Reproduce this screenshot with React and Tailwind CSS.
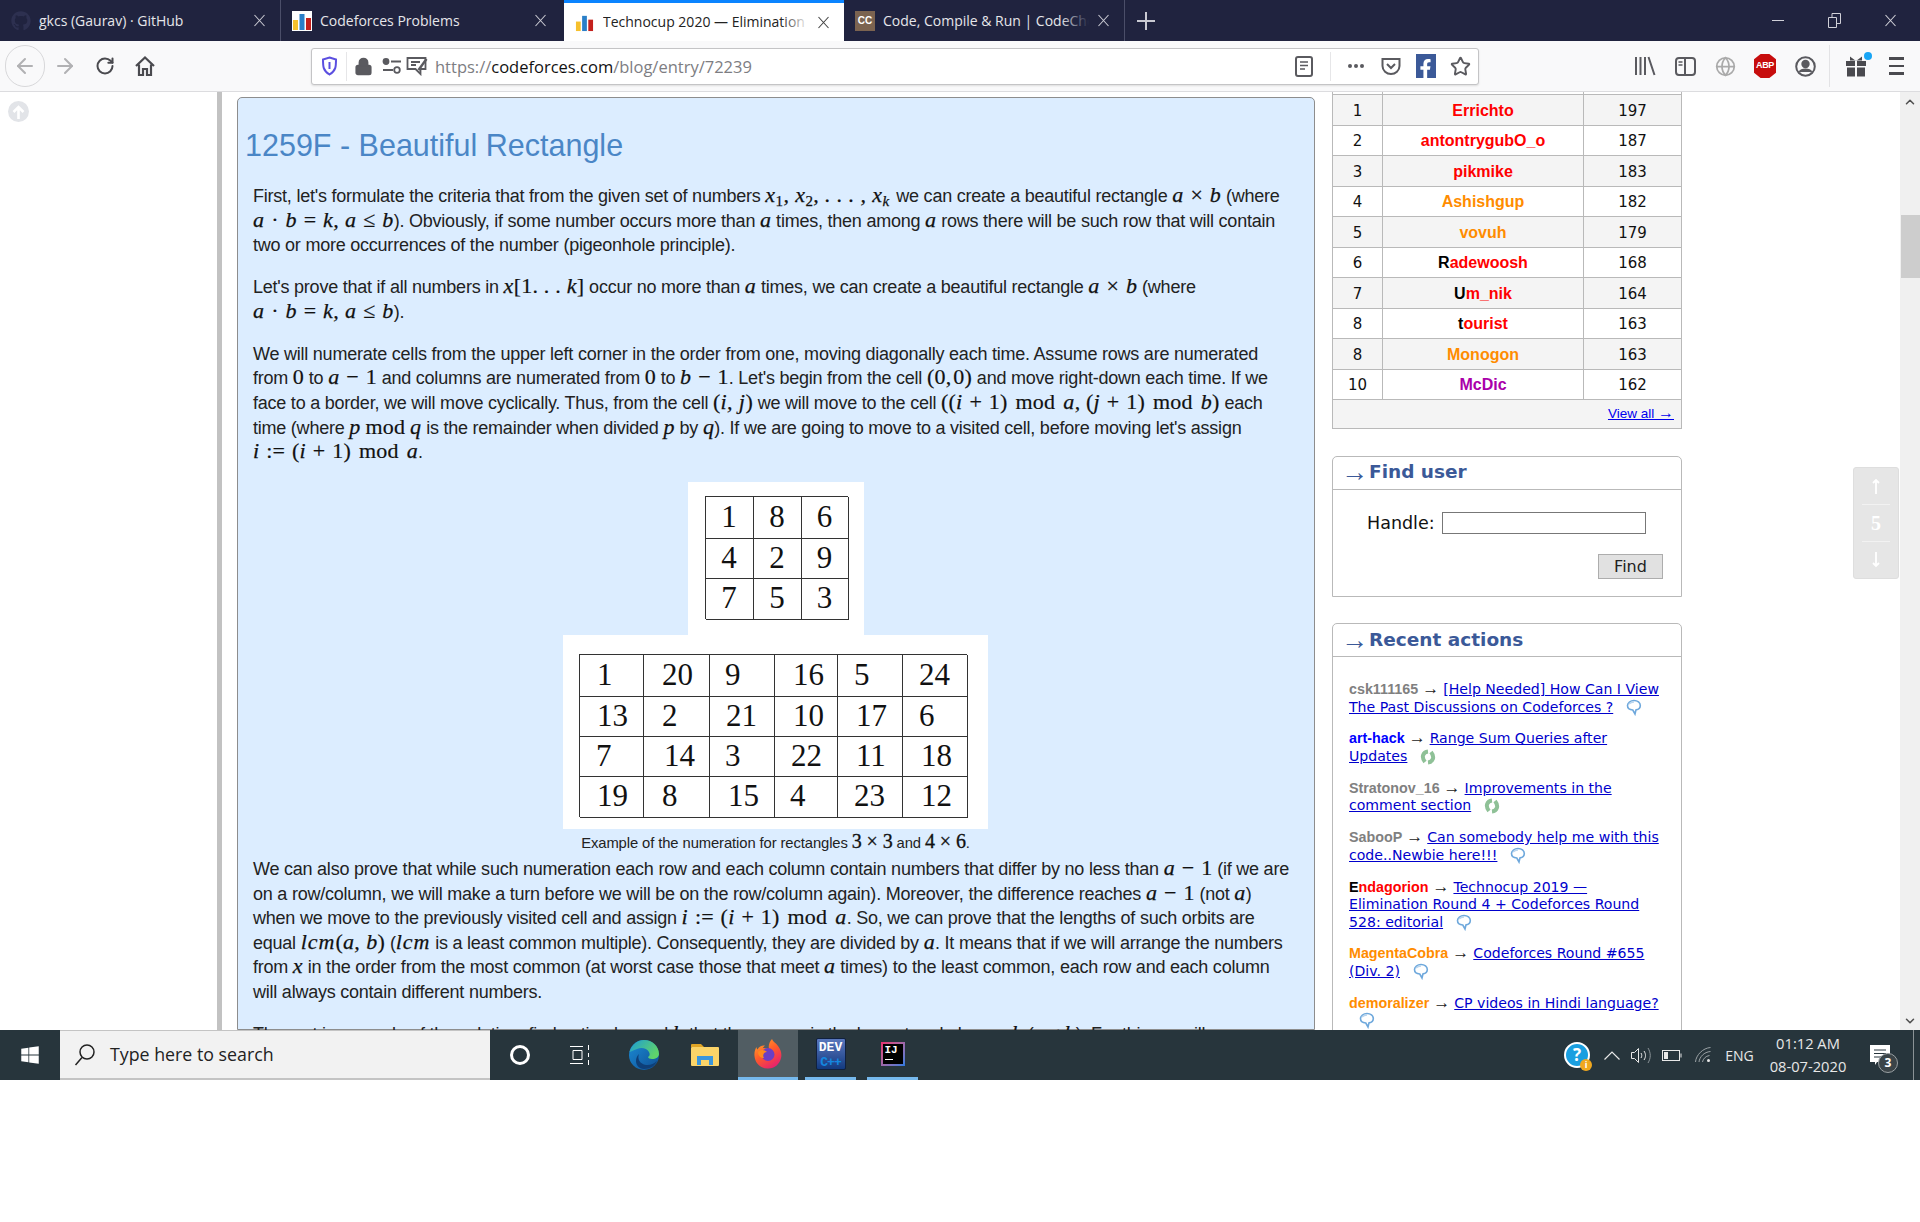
import React from "react";
import { ArrowLeft, ArrowRight, RotateCw, Lock, Star, ChevronUp, ChevronDown, Globe } from "lucide-react";
import { FaGithub, FaFacebookF, FaWindows } from "react-icons/fa";

const M = ({ children }) => <span className="font-['Liberation_Serif'] italic text-[22px] leading-none tracking-[0.4px] text-[#111] [-webkit-text-stroke:0.25px_#111]">{children}</span>;
const U = ({ children }) => <span className="font-['Liberation_Serif'] text-[22px] leading-none tracking-[0.2px] text-[#111] [-webkit-text-stroke:0.2px_#111]">{children}</span>;
const Op = ({ children }) => <span className="mx-[2px]"><U>{children}</U></span>;
const Mod = () => <span className="mx-[8px]"><U>mod</U></span>;
const Lcm = () => <span className="font-['Liberation_Serif'] italic text-[22px] leading-none tracking-[1px] text-[#111] [-webkit-text-stroke:0.25px_#111]">lcm</span>;
const C = ({ children }) => <span className="font-['Liberation_Serif'] text-[20px] leading-none text-[#111] [-webkit-text-stroke:0.3px_#111]">{children}</span>;
const L = ({ children }) => <div className="h-[24.6px] leading-[24.6px] whitespace-nowrap">{children}</div>;

const CfIcon = ({ size = 20 }) => (
  <svg width={size} height={size} viewBox="0 0 20 20">
    <rect x="1" y="9" width="5" height="10" fill="#f6c02c" />
    <rect x="7.5" y="3" width="5" height="16" fill="#2a7fc8" />
    <rect x="14" y="7" width="5" height="12" fill="#c4201c" />
  </svg>
);
const TabX = ({ c }) => (
  <svg width="13" height="13" viewBox="0 0 13 13" stroke={c} strokeWidth="1.1" className="shrink-0">
    <path d="M1.5 1L11.5 12M11.5 1L1.5 12" />
  </svg>
);

const Tab = ({ icon, label, active, last, wide }) => (
  <div className={active
    ? "relative w-[280px] h-[41px] shrink-0 flex items-center bg-white border-t-[3px] border-[#0a84ff] text-[#222]"
    : wide
      ? "relative w-[283px] h-[41px] shrink-0 flex items-center text-[#e6e6ea]"
      : "relative w-[281px] h-[41px] shrink-0 flex items-center border-r border-[#4b4e69] text-[#e6e6ea]"}>
    <span className="w-[39px] pl-[11px] shrink-0 flex items-center">{icon}</span>
    <span className="relative w-[206px] overflow-hidden whitespace-nowrap font-['Open_Sans'] text-[14px] leading-[20px]">
      {label}
      {active && <span className="absolute right-0 top-0 h-full w-[28px] bg-linear-to-r from-transparent to-white" />}
      {last && <span className="absolute right-0 top-0 h-full w-[28px] bg-linear-to-r from-transparent to-[#20233f]" />}
    </span>
    <span className="w-[8px] shrink-0" />
    <TabX c={active ? "#444" : "#c9c9d2"} />
  </div>
);

const TB = ({ children }) => <div className="w-[40px] h-[42px] flex items-center justify-center shrink-0">{children}</div>;

const board = [
  ["1", "Errichto", "197", "r"], ["2", "antontrygubO_o", "187", "r"], ["3", "pikmike", "183", "r"],
  ["4", "Ashishgup", "182", "o"], ["5", "vovuh", "179", "o"], ["6", "Radewoosh", "168", "l"],
  ["7", "Um_nik", "164", "l"], ["8", "tourist", "163", "l"], ["8", "Monogon", "163", "o"], ["10", "McDic", "162", "m"],
];
const Name = ({ n, k }) => {
  if (k === "l") return <><span className="text-black">{n[0]}</span><span className="text-[#ff0000]">{n.slice(1)}</span></>;
  return <span className={k === "r" ? "text-[#ff0000]" : k === "o" ? "text-[#ff8c00]" : "text-[#aa00aa]"}>{n}</span>;
};

const Bubble = () => (
  <svg width="16" height="17" viewBox="0 0 16 17" fill="none" stroke="#6ea8dc" strokeWidth="1.6" className="absolute left-0 top-[-13px]">
    <path d="M8 1.500c3.600 0 6.300 2.300 6.300 5s-2 4-4.300 4.400L9 15l-2.200-4C3.600 10.800 1.500 9 1.500 6.500S4.400 1.500 8 1.500z" />
    <path d="M3 5c1.500-1.500 3-2 5-2" stroke="#b9d5ee" />
  </svg>
);
const Swirl = () => (
  <svg width="16" height="16" viewBox="0 0 16 16" fill="none" stroke="#8fc197" strokeWidth="4" className="absolute left-0 top-[-12px]">
    <path d="M8 2.500C3 3 1 8 5 13" />
    <path d="M8 13.500C13 13 15 8 11 3" />
  </svg>
);
const Arrow = () => <span className="font-['Liberation_Serif'] text-[#222] text-[17px] leading-none mx-[4px]">→</span>;
const Act = ({ h, lines, icon, tight }) => (
  <div className="mb-[13.4px] leading-[17.5px] whitespace-nowrap font-['DejaVu_Sans'] text-[14.1px]">
    {h}
    <Arrow />
    {lines.map((t, i) => (
      <React.Fragment key={i}>
        {i > 0 && <br />}
        <a className="text-[#0000cc] underline">{t}</a>
      </React.Fragment>
    ))}
    <span className={tight ? "relative inline-block w-[16px] h-0 ml-[10px]" : "relative inline-block w-[16px] h-0 ml-[13px]"}>{icon === "s" ? <Swirl /> : <Bubble />}</span>
  </div>
);
const H = ({ c, children }) => <b className={"font-['Liberation_Sans'] text-[14.3px] " + c}>{children}</b>;

const t2 = [
  [["1", "pl-[17px]"], ["20", "pl-[18px]"], ["9", "pl-[15px]"], ["16", "pl-[18px]"], ["5", "pl-[16px]"], ["24", "pl-[16px]"]],
  [["13", "pl-[17px]"], ["2", "pl-[18px]"], ["21", "pl-[16px]"], ["10", "pl-[18px]"], ["17", "pl-[18px]"], ["6", "pl-[16px]"]],
  [["7", "pl-[16px]"], ["14", "pl-[20px]"], ["3", "pl-[15px]"], ["22", "pl-[16px]"], ["11", "pl-[18px]"], ["18", "pl-[18px]"]],
  [["19", "pl-[17px]"], ["8", "pl-[18px]"], ["15", "pl-[18px]"], ["4", "pl-[15px]"], ["23", "pl-[16px]"], ["12", "pl-[18px]"]],
];

const Firefox = () => (
  <svg width="30" height="30" viewBox="0 0 30 30">
    <defs>
      <linearGradient id="ff1" x1="0" y1="0" x2="0.6" y2="1"><stop offset="0" stopColor="#ffb02a" /><stop offset="0.55" stopColor="#ff5a2a" /><stop offset="1" stopColor="#e8246b" /></linearGradient>
    </defs>
    <path d="M19 0c1 3 4 4 6 7 3 4 4 8 3 12-1 6-7 11-13.500 10.500C7 29 2 24 1.500 17 1 13 2.500 9.500 3.500 8c0 1 .5 2 1 2.500C6 7.500 9 6 12 6.500c-1 1-2 2-2 2.500 3 0 6 1 6 1-1-4 1-8 3-10z" fill="url(#ff1)" />
    <circle cx="15" cy="15.500" r="6.500" fill="#6b3fc4" />
    <path d="M5 13c3-3 7-2 9 0-3 0-5 3-3 6-3 0-6-2-6-6z" fill="#ff8a1e" />
  </svg>
);
const Edge = () => (
  <svg width="32" height="32" viewBox="0 0 32 32">
    <defs>
      <linearGradient id="ed1" x1="0" y1="0" x2="1" y2="0.5"><stop offset="0" stopColor="#1a9ad8" /><stop offset="1" stopColor="#5fd36b" /></linearGradient>
      <linearGradient id="ed2" x1="0" y1="0" x2="1" y2="1"><stop offset="0" stopColor="#1b8cd6" /><stop offset="1" stopColor="#0f4f94" /></linearGradient>
    </defs>
    <circle cx="16" cy="16" r="15" fill="url(#ed2)" />
    <path d="M1.500 13C4 5 10 1 16 1c8 0 15 6 15 14 0 3-3 5-7 5-2 0-4-1-4-2 2-1 2-3 1-5-2-4-8-5-12-3-4 1.500-6 3-8.500 3z" fill="url(#ed1)" />
    <path d="M11 15c-2 5 1 10 7 11 4 .5 8-1 11-4-2 5-7 8-13 8-5 0-8-4-8-8 0-3 1-5 3-7z" fill="#0e3f78" />
  </svg>
);
const HArrow = () => <span className="font-['Liberation_Serif'] font-normal text-[27px] leading-none mr-[1px]">→</span>;

export default function App() {
  return (
    <div className="w-[1920px] h-[1222px] flex flex-col overflow-hidden bg-white font-['Liberation_Sans',sans-serif]">
      {/* tab strip */}
      <div className="h-[41px] shrink-0 flex items-stretch bg-[#20233f]">
        <Tab icon={<FaGithub size={20} color="#2d3050" />} label="gkcs (Gaurav) · GitHub" />
        <Tab wide icon={<span className="bg-white w-[20px] h-[20px] flex"><CfIcon /></span>} label="Codeforces Problems" />
        <Tab active icon={<CfIcon size={19} />} label="Technocup 2020 — Elimination Round 3" />
        <Tab last icon={<span className="w-[20px] h-[20px] bg-[#7b6350] flex items-center justify-center text-white text-[10px] font-bold font-['Liberation_Sans']">CC</span>} label="Code, Compile & Run | CodeChef" />
        <div className="ml-[11px] w-[20px] flex items-center justify-center">
          <svg width="18" height="18" viewBox="0 0 18 18" stroke="#c9c9d2" strokeWidth="2"><path d="M9 0v18M0 9h18" /></svg>
        </div>
        <div className="ml-auto flex items-center text-[#d0d0d8]">
          <div className="w-[56px] flex justify-center"><svg width="12" height="2" viewBox="0 0 12 2" fill="#d0d0d8"><rect width="12" height="1" /></svg></div>
          <div className="w-[56px] flex justify-center">
            <svg width="13" height="15" viewBox="0 0 13 15" fill="none" stroke="#d0d0d8"><path d="M.5 4.500h8v10h-8zM4 4V.5h8.500v10H9" /></svg>
          </div>
          <div className="w-[58px] flex justify-center pr-[2px]"><TabX c="#d0d0d8" /></div>
        </div>
      </div>

      {/* toolbar */}
      <div className="h-[51px] shrink-0 flex items-center bg-[#f9f9fa] border-b border-[#dcdcdf] pl-[5px]">
        <div className="w-[40px] h-[42px] rounded-full border border-[#d8d8da] flex items-center justify-center shrink-0"><ArrowLeft size={24} color="#b1b1b3" strokeWidth={2} /></div>
        <TB><ArrowRight size={24} color="#b1b1b3" strokeWidth={2} /></TB>
        <TB><RotateCw size={20} color="#4a4a4f" strokeWidth={2.4} /></TB>
        <TB>
          <svg width="22" height="22" viewBox="0 0 22 22" fill="none" stroke="#4a4a4f" strokeWidth="2.200"><path d="M2 11l9-8.500L20 11M5 9.500V20h4v-6h4v6h4V9.500" /></svg>
        </TB>
        <div className="ml-[146px] w-[1168px] h-[37px] shrink-0 rounded-[3px] bg-white border border-[#c4c4c6] shadow-[0_1px_2px_#ddd] flex items-center">
          <div className="w-[34px] flex justify-center">
            <svg width="17" height="20" viewBox="0 0 17 20" fill="none" stroke="#5b4fe0" strokeWidth="2"><path d="M8.500 1.500l6.500 2c0 7 0 11-6.500 15C2 14.500 2 10.500 2 3.500z" /><path d="M8.500 6v7" strokeWidth="2" /></svg>
          </div>
          <div className="w-px h-[29px] bg-[#e6e6e8]" />
          <div className="w-[33px] flex justify-center"><Lock size={19} color="#5a5a5f" fill="#5a5a5f" strokeWidth={2.4} /></div>
          <div className="w-[24px] flex justify-center">
            <svg width="20" height="18" viewBox="0 0 20 18" fill="none" stroke="#5a5a5f" strokeWidth="1.800"><circle cx="4" cy="4.500" r="2.500" fill="#5a5a5f" /><path d="M9 4.500h10M1 13h10" /><circle cx="15" cy="13" r="2.800" /></svg>
          </div>
          <div className="w-[26px] flex justify-center">
            <svg width="22" height="20" viewBox="0 0 22 20" fill="none" stroke="#5a5a5f" strokeWidth="1.800"><path d="M1.500 2h18v11h-5v5l-5-5h-8z" /><path d="M5 6h9M5 9h5" /><path d="M20.500 3l-8 11" strokeWidth="2.400" /></svg>
          </div>
          <div className="ml-[5px] pt-[3px] font-['Open_Sans'] text-[16.5px] text-[#7d7d82] whitespace-nowrap">https://<span className="text-[#111]">codeforces.com</span>/blog/entry/72239</div>
          <div className="ml-auto flex items-center">
            <div className="w-[36px] ml-[1px] flex justify-center">
              <svg width="18" height="21" viewBox="0 0 18 21" fill="none" stroke="#5a5a5f" strokeWidth="2"><rect x="1" y="1" width="16" height="19" rx="2" /><path d="M5 6h8M5 9.500h8M5 13h5" strokeWidth="1.500" /></svg>
            </div>
            <div className="w-px h-[29px] bg-[#e6e6e8] mx-[8px]" />
            <div className="w-[34px] flex justify-center gap-[2px]"><span className="w-[4px] h-[4px] rounded-full bg-[#5a5a5f]" /><span className="w-[4px] h-[4px] rounded-full bg-[#5a5a5f]" /><span className="w-[4px] h-[4px] rounded-full bg-[#5a5a5f]" /></div>
            <div className="w-[35px] flex justify-center">
              <svg width="20" height="19" viewBox="0 0 20 19" fill="none" stroke="#5a5a5f" strokeWidth="2"><path d="M1.500 2h17v7c0 4.500-4 8-8.500 8s-8.500-3.500-8.500-8z" /><path d="M6 7l4 4 4-4" /></svg>
            </div>
            <div className="w-[35px] flex justify-center"><span className="w-[20px] h-[24px] bg-[#3b5998] flex items-end justify-center"><FaFacebookF size={19} color="#fff" /></span></div>
            <div className="w-[35px] flex justify-center"><Star size={21} color="#5a5a5f" strokeWidth={2.2} /></div>
          </div>
        </div>
        <div className="ml-[146px] flex items-center shrink-0">
          <TB>
            <svg width="22" height="20" viewBox="0 0 22 20" stroke="#5a5a5f" strokeWidth="2" fill="none"><path d="M2 1v18M6.500 1v18M11 1v18M14.500 1l6 18" /></svg>
          </TB>
          <TB>
            <svg width="21" height="19" viewBox="0 0 21 19" fill="none" stroke="#5a5a5f" strokeWidth="2"><rect x="1" y="1" width="19" height="17" rx="3" /><path d="M10 1v17" /><path d="M3.500 5h4M3.500 8h4" strokeWidth="1.300" /></svg>
          </TB>
          <TB><Globe size={21} color="#aaaaaa" strokeWidth={2} /></TB>
          <TB>
            <span className="w-[22px] h-[24px] bg-[#c70d0d] [clip-path:polygon(30%_0,70%_0,100%_22%,100%_78%,70%_100%,30%_100%,0_78%,0_22%)] flex items-center justify-center text-white text-[9px] font-bold tracking-[-0.3px]">ABP</span>
          </TB>
          <TB>
            <svg width="21" height="21" viewBox="0 0 21 21" fill="none" stroke="#5a5a5f" strokeWidth="2"><circle cx="10.500" cy="10.500" r="9.300" /><circle cx="10.500" cy="8" r="3.200" fill="#5a5a5f" /><path d="M4.500 16c2-3.500 10-3.500 12 0" fill="#5a5a5f" /></svg>
          </TB>
          <div className="w-px h-[42px] bg-[#e3e3e5] ml-[4px] mr-[6px]" />
          <TB>
            <span className="relative">
              <svg width="22" height="22" viewBox="0 0 22 22" fill="#4a4a4f"><rect x="1" y="6" width="9" height="5" /><rect x="12" y="6" width="9" height="5" /><rect x="2" y="12.500" width="8" height="9" /><rect x="12" y="12.500" width="8" height="9" /><path d="M5 1.500l6 4.500 6-4.500v4H5z" /></svg>
              <span className="absolute -top-[3px] -right-[5px] w-[8px] h-[8px] rounded-full bg-[#18a5f5]" />
            </span>
          </TB>
          <TB><span className="flex flex-col gap-[5px]"><span className="block w-[15px] h-[2.500px] bg-[#4a4a4f]" /><span className="block w-[15px] h-[2.500px] bg-[#4a4a4f]" /><span className="block w-[15px] h-[2.500px] bg-[#4a4a4f]" /></span></TB>
        </div>
      </div>

      {/* page */}
      <div className="relative h-[938px] shrink-0 flex overflow-hidden bg-white">
        <div className="w-[217px] shrink-0 pl-[8px] pt-[9px]">
          <div className="w-[21px] h-[21px] rounded-full bg-[#e2e4e8] flex items-center justify-center">
            <svg width="13" height="14" viewBox="0 0 13 14" fill="none" stroke="#fff" strokeWidth="2.600"><path d="M6.500 14V2M1.500 7l5-5 5 5" /></svg>
          </div>
        </div>
        <div className="w-[5px] shrink-0 bg-[#c2c2c2]" />

        {/* blog card */}
        <div className="ml-[15px] mt-[5px] w-[1078px] shrink-0 rounded-t-[5px] border border-[#8d8d8d] bg-[#dcedff] text-[#222] text-[18px] tracking-[-0.23px]">
          <div className="pl-[7px] pt-[27px] h-[67px] text-[30.5px] leading-[40px] text-[#4a86c6] tracking-normal">1259F - Beautiful Rectangle</div>
          <div className="pl-[15px] pt-[19px]">
            <L>First, let's formulate the criteria that from the given set of numbers <M>x<sub className="text-[15px] not-italic">1</sub>, x<sub className="text-[15px] not-italic">2</sub>, . . . , x<sub className="text-[15px]">k</sub></M><span className="ml-[2px]"> we can create a beautiful rectangle </span><M>a</M> <Op>×</Op> <M>b</M> (where</L>
            <L><M>a</M> <Op>·</Op> <M>b</M> <Op>=</Op> <M>k, a</M> <Op>≤</Op> <M>b</M>). Obviously, if some number occurs more than <M>a</M> times, then among <M>a</M> rows there will be such row that will contain</L>
            <L>two or more occurrences of the number (pigeonhole principle).</L>
            <div className="h-[17.4px]" />
            <L>Let's prove that if all numbers in <M>x</M><U>[1. . . </U><M>k</M><U>]</U> occur no more than <M>a</M> times, we can create a beautiful rectangle <M>a</M> <Op>×</Op> <M>b</M> (where</L>
            <L><M>a</M> <Op>·</Op> <M>b</M> <Op>=</Op> <M>k, a</M> <Op>≤</Op> <M>b</M>).</L>
            <div className="h-[17.4px]" />
            <L>We will numerate cells from the upper left corner in the order from one, moving diagonally each time. Assume rows are numerated</L>
            <L>from <U>0</U> to <M>a</M> <Op>−</Op> <U>1</U> and columns are numerated from <U>0</U> to <M>b</M> <Op>−</Op> <U>1</U>. Let's begin from the cell <U>(0,</U><span className="ml-[2px]"><U>0)</U></span> and move right-down each time. If we</L>
            <L>face to a border, we will move cyclically. Thus, from the cell <U>(</U><M>i, j</M><U>)</U> we will move to the cell <U>((</U><M>i</M> <Op>+</Op> <U>1)</U><Mod /><M>a</M><U>, (</U><M>j</M> <Op>+</Op> <U>1)</U><Mod /><M>b</M><U>)</U> each</L>
            <L>time (where <M>p</M> <U>mod</U> <M>q</M> is the remainder when divided <M>p</M> by <M>q</M>). If we are going to move to a visited cell, before moving let's assign</L>
            <L><M>i</M> <Op>:=</Op> <U>(</U><M>i</M> <Op>+</Op> <U>1)</U><Mod /><M>a</M>.</L>
          </div>

          <div className="mt-[17px] flex flex-col items-center pr-[1px] text-[#111] font-['Liberation_Serif'] tracking-normal">
            <div className="w-[176px] h-[153px] bg-white flex justify-center pt-[14px] pl-[1px]">
              <div className="w-[143px] h-[123px] grid grid-cols-[48px_48px_47px] grid-rows-[42px_40px_41px] border-l border-t border-[#333] text-[31px] leading-none">
                {["1", "8", "6", "4", "2", "9", "7", "5", "3"].map((n, i) => (
                  <div key={i} className="border-r border-b border-[#333] flex items-center justify-center pb-[2px]">{n}</div>
                ))}
              </div>
            </div>
            <div className="w-[425px] h-[194px] bg-white pt-[19px] pl-[16px]">
              <div className="w-[388px] h-[163px] grid grid-cols-[64px_66px_65px_63px_65px_65px] grid-rows-[42px_40px_40px_41px] border-l border-t border-[#333] text-[31px] leading-none">
                {t2.flat().map(([n, p], i) => (
                  <div key={i} className={"border-r border-b border-[#333] flex items-center pb-[2px] " + p}>{n}</div>
                ))}
              </div>
            </div>
          </div>
          <div className="h-[28.2px] leading-[28.2px] pr-[1px] text-center text-[14.8px] tracking-[-0.1px] whitespace-nowrap">Example of the numeration for rectangles <C>3 × 3</C> and <C>4 × 6</C>.</div>
          <div className="pl-[15px]">
            <L>We can also prove that while such numeration each row and each column contain numbers that differ by no less than <M>a</M> <Op>−</Op> <U>1</U> (if we are</L>
            <L>on a row/column, we will make a turn before we will be on the row/column again). Moreover, the difference reaches <M>a</M> <Op>−</Op> <U>1</U> (not <M>a</M>)</L>
            <L>when we move to the previously visited cell and assign <M>i</M> <Op>:=</Op> <U>(</U><M>i</M> <Op>+</Op> <U>1)</U><Mod /><M>a</M>. So, we can prove that the lengths of such orbits are</L>
            <L>equal <Lcm /><U>(</U><M>a, b</M><U>)</U> (<Lcm /> is a least common multiple). Consequently, they are divided by <M>a</M>. It means that if we will arrange the numbers</L>
            <L>from <M>x</M> in the order from the most common (at worst case those that meet <M>a</M> times) to the least common, each row and each column</L>
            <L>will always contain different numbers.</L>
            <div className="h-[17.4px]" />
            <L>The rest is a couple of the solution: find optimal <M>a</M> and <M>b</M> that the square is the largest and also <M>a</M> · <M>b</M> (<M>a</M> ≤ <M>b</M>). For this we will</L>
          </div>
        </div>

        {/* sidebar */}
        <div className="ml-[17px] w-[350px] shrink-0">
          <div className="border-x border-b border-[#b9b9b9] text-[#111]">
            <div className="grid grid-cols-[50px_201px_1fr] h-[2px]"><div className="border-r border-[#b9b9b9]" /><div className="border-r border-[#b9b9b9]" /><div /></div>
            {board.map((r, i) => (
              <div key={i} className={"grid grid-cols-[50px_201px_1fr] h-[30.500px] border-t border-[#b9b9b9] items-stretch " + (i % 2 === 0 ? "bg-[#f4f4f4]" : "bg-white")}>
                <div className="border-r border-[#b9b9b9] flex items-center justify-center pt-[2px] font-['DejaVu_Sans'] text-[15px]">{r[0]}</div>
                <div className="border-r border-[#b9b9b9] flex items-center justify-center pt-[2px] font-bold text-[16px]"><Name n={r[1]} k={r[3]} /></div>
                <div className="flex items-center justify-center pt-[2px] font-['DejaVu_Sans'] text-[15px]">{r[2]}</div>
              </div>
            ))}
            <div className="h-[29px] border-t border-[#b9b9b9] bg-[#f4f4f4] flex items-center justify-end pr-[7px] text-[13.500px] text-[#0000ee]"><span className="underline whitespace-pre">View all <span className="font-['Liberation_Serif'] text-[16px] leading-none">→</span></span></div>
          </div>

          <div className="mt-[27px] h-[141px] rounded-t-[5px] border border-[#b9b9b9]">
            <div className="h-[33px] border-b border-[#b9b9b9] flex items-center pl-[8px] pb-[2px] text-[#3b5998] font-['DejaVu_Sans'] font-bold text-[18.500px]"><HArrow />Find user</div>
            <div className="flex items-center pl-[34px] pt-[20px] font-['DejaVu_Sans'] text-[17.5px] text-[#111]">
              Handle:
              <span className="ml-[7px] w-[204px] h-[22px] bg-white border border-[#777]" />
            </div>
            <div className="flex justify-end pr-[18px] pt-[18px]">
              <span className="w-[65px] h-[25px] bg-[#e1e1e1] border border-[#adadad] flex items-center justify-center font-['DejaVu_Sans'] text-[16px] text-[#222]">Find</span>
            </div>
          </div>

          <div className="mt-[26px] rounded-t-[5px] border border-[#b9b9b9] h-[420px]">
            <div className="h-[33px] border-b border-[#b9b9b9] flex items-center pl-[8px] text-[#3b5998] font-['DejaVu_Sans'] font-bold text-[18.500px]"><HArrow />Recent actions</div>
            <div className="pl-[16px] pt-[23px] text-[#111]">
              <Act h={<H c="text-[#808080]">csk111165</H>} lines={["[Help Needed] How Can I View", "The Past Discussions on Codeforces ?"]} />
              <Act h={<H c="text-[#0000ff]">art-hack</H>} lines={["Range Sum Queries after", "Updates"]} icon="s" />
              <Act h={<H c="text-[#808080]">Stratonov_16</H>} lines={["Improvements in the", "comment section"]} icon="s" />
              <Act h={<H c="text-[#808080]">SabooP</H>} lines={["Can somebody help me with this", "code..Newbie here!!!"]} />
              <Act h={<H c="text-[#ff0000]"><span className="text-black">E</span>ndagorion</H>} lines={["Technocup 2019 —", "Elimination Round 4 + Codeforces Round", "528: editorial"]} />
              <Act h={<H c="text-[#ff8c00]">MagentaCobra</H>} lines={["Codeforces Round #655", "(Div. 2)"]} />
              <Act tight h={<H c="text-[#ff8c00]">demoralizer</H>} lines={["CP videos in Hindi language?", ""]} />
            </div>
          </div>
        </div>

        {/* vote box */}
        <div className="absolute left-[1853px] top-[375px] w-[46px] h-[112px] rounded-[3px] bg-[#e6e6e6] border border-[#dedede] flex flex-col items-center text-white">
          <div className="h-[37px] w-[28px] border-b border-[#f2f2f2] flex items-center justify-center"><svg width="8" height="16" viewBox="0 0 8 16" fill="none" stroke="#fff" strokeWidth="1.800"><path d="M4 16V2M1 5l3-3 3 3" /></svg></div>
          <div className="h-[38px] w-[28px] border-b border-[#f2f2f2] flex items-center justify-center font-['Liberation_Serif'] font-bold text-[20px]">5</div>
          <div className="h-[36px] flex items-center justify-center"><svg width="8" height="16" viewBox="0 0 8 16" fill="none" stroke="#fff" strokeWidth="1.800"><path d="M4 0v14M1 11l3 3 3-3" /></svg></div>
        </div>

        {/* scrollbar */}
        <div className="ml-auto w-[20px] shrink-0 bg-[#f0f0f0] flex flex-col items-center justify-between pb-[2px]">
          <div>
            <div className="h-[20px] flex items-center justify-center"><ChevronUp size={14} color="#505050" strokeWidth={2.6} /></div>
            <div className="mt-[103px] w-[19px] h-[63px] bg-[#cdcdcd]" />
          </div>
          <ChevronDown size={14} color="#505050" strokeWidth={2.6} />
        </div>
      </div>

      {/* taskbar */}
      <div className="h-[50px] shrink-0 flex items-stretch bg-[#27353c]">
        <div className="w-[60px] flex items-center justify-center"><FaWindows size={20} color="#fff" /></div>
        <div className="w-[430px] bg-[#f2f2f2] border-t border-b-2 border-[#c4c4c4] flex items-center pl-[14px] font-['Open_Sans'] text-[#222] text-[17.8px]">
          <svg width="22" height="24" viewBox="0 0 22 24" fill="none" stroke="#222" strokeWidth="1.500" className="mr-[14px]"><circle cx="13" cy="9" r="7" /><path d="M8 14.500L1.500 22" /></svg>
          Type here to search
        </div>
        <div className="w-[60px] flex items-center justify-center"><span className="w-[20px] h-[20px] rounded-full border-[3px] border-white" /></div>
        <div className="w-[60px] flex items-center justify-center">
          <svg width="20" height="20" viewBox="0 0 20 20" fill="none" stroke="#fff" strokeWidth="1"><path d="M0 1.500h13M0 18.500h13M3 5.500h9v9H3zM18.500 0v5M18.500 8v4M18.500 15v5" /></svg>
        </div>
        <div className="w-[68px] flex items-center justify-center"><Edge /></div>
        <div className="w-[60px] flex items-center justify-center pr-[6px]">
          <svg width="28" height="24" viewBox="0 0 28 24"><path d="M0 2a1 1 0 0 1 1-1h9l3 3h-13z" fill="#e0a526" /><rect y="4" width="28" height="19" rx="1" fill="#fbd468" /><path d="M6 22V13h16v9h-4v-5h-8v5z" fill="#3a96dd" /></svg>
        </div>
        <div className="w-[60px] bg-[#515d63] border-b-[3px] border-[#76b9ed] flex items-center justify-center"><Firefox /></div>
        <div className="ml-[7px] w-[51px] border-b-[3px] border-[#76b9ed] flex items-center justify-center">
          <div className="w-[30px] h-[32px] rounded-[2px] bg-linear-to-b from-[#5a78bd] to-[#123a80] border border-[#10213f] flex flex-col items-center leading-none font-['Liberation_Mono'] font-bold text-[13px] overflow-hidden pt-[2px]">
            <span className="text-white">DEV</span>
            <span className="text-[#1488e0] tracking-[-1px] mt-[2px]">C++</span>
          </div>
        </div>
        <div className="ml-[11px] w-[51px] border-b-[3px] border-[#76b9ed] flex items-center justify-center">
          <div className="w-[24px] h-[24px] bg-linear-to-br from-[#e8286e] to-[#1f7ae0] p-[2px]">
            <div className="w-full h-full bg-black text-white font-['Liberation_Mono'] font-bold text-[11px] leading-[11px] pl-[2px] pt-[1px]">
              IJ
              <div className="w-[8px] h-[1.500px] bg-white mt-[3px]" />
            </div>
          </div>
        </div>

        <div className="ml-auto flex items-center text-[#e8e8e8] font-['Open_Sans']">
          <div className="w-[28px] flex justify-center relative">
            <span className="w-[26px] h-[26px] rounded-full bg-[#1a9fe0] border-2 border-white text-white text-[17px] font-bold leading-[22px] text-center">?</span>
            <span className="absolute -right-[1px] -bottom-[3px] w-[12px] h-[12px] rounded-full bg-[#f0a81f] text-white text-[9px] font-bold leading-[12px] text-center">i</span>
          </div>
          <div className="ml-[6px] w-[30px] flex justify-center">
            <svg width="16" height="9" viewBox="0 0 16 9" fill="none" stroke="#e8e8e8" strokeWidth="1.200"><path d="M.5 8.500L8 1l7.500 7.500" /></svg>
          </div>
          <div className="w-[28px] flex justify-center">
            <svg width="20" height="17" viewBox="0 0 20 17" fill="none" stroke="#e8e8e8" strokeWidth="1"><path d="M.5 5.500h3l4-4v14l-4-4h-3z" /><path d="M10 6c1 1.500 1 3.500 0 5M13 4c2 3 2 6 0 9" /><path d="M17 1c3 5 3 10 0 15" stroke="#8c9499" /></svg>
          </div>
          <div className="ml-[2px] w-[30px] flex justify-center">
            <svg width="20" height="11" viewBox="0 0 20 11" fill="none" stroke="#e8e8e8" strokeWidth="1"><rect x=".5" y=".5" width="17" height="10" /><rect x="2" y="2" width="4" height="7" fill="#e8e8e8" stroke="none" /><path d="M19 3.500v4" /></svg>
          </div>
          <div className="ml-[2px] w-[28px] flex justify-center">
            <svg width="16" height="16" viewBox="0 0 16 16" fill="none" stroke="#9ba2a6" strokeWidth="1"><path d="M.5 15C1 8 8 1 15.500 .5M4 15c.5-5 5-10 11.500-10.500M7.500 15c.5-3 3-6 7-6.500" /><circle cx="13.500" cy="13.500" r="1.500" fill="#e8e8e8" stroke="none" /></svg>
          </div>
          <div className="w-[44px] pl-[1px] text-center text-[14px]">ENG</div>
          <div className="ml-[7px] w-[80px] text-center text-[14.700px] leading-[23px] whitespace-nowrap flex flex-col items-center">
            <span>01:12 AM</span>
            <span>08-07-2020</span>
          </div>
          <div className="ml-[12px] w-[40px] flex justify-center relative">
            <svg width="20" height="20" viewBox="0 0 20 20"><path d="M0 0h20v17H7l-2 3v-3H0z" fill="#fff" /><path d="M4 5h12M4 8.500h12M4 12h12" stroke="#27353c" /></svg>
            <span className="absolute left-[18px] top-[8px] w-[20px] h-[20px] rounded-full bg-[#3b4448] border border-[#9aa0a3] text-white text-[12px] font-bold leading-[18px] text-center">3</span>
          </div>
          <div className="ml-[13px] w-px h-full bg-[#8a9296]" />
          <div className="w-[6px]" />
        </div>
      </div>
      <div className="flex-1 bg-white" />
    </div>
  );
}
